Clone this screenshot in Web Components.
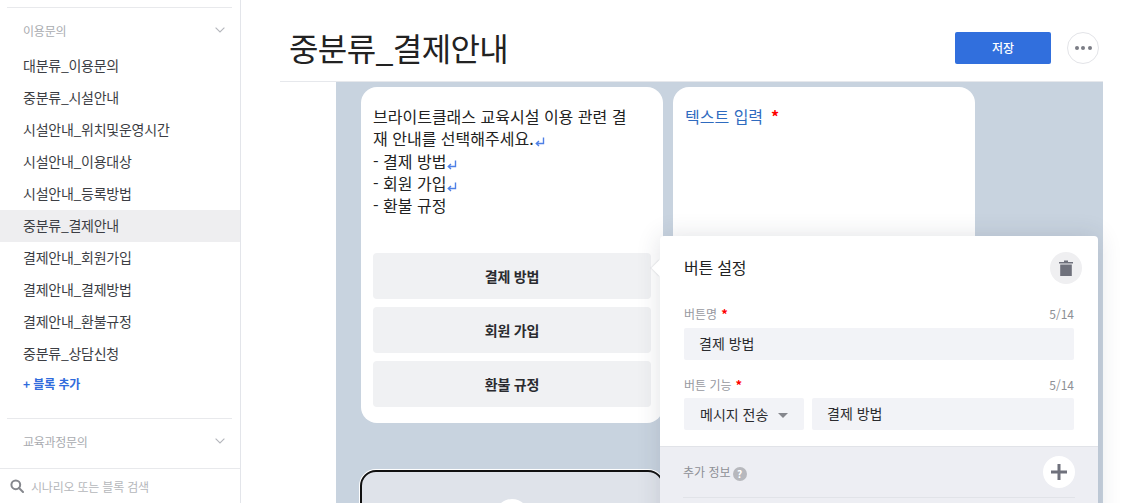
<!DOCTYPE html>
<html lang="ko">
<head>
<meta charset="utf-8">
<title>중분류_결제안내</title>
<style>
html, body { margin: 0; height: 100%; overflow: hidden; background: #fff; }
body { display: flex; height: 503px; font-family: "Noto Sans CJK KR", "Noto Sans", sans-serif; color: #222; }
</style>
</head>
<body>
<app-sidebar>
  <side-group title="이용문의" open>
    <side-item>대분류_이용문의</side-item>
    <side-item>중분류_시설안내</side-item>
    <side-item>시설안내_위치및운영시간</side-item>
    <side-item>시설안내_이용대상</side-item>
    <side-item>시설안내_등록방법</side-item>
    <side-item active>중분류_결제안내</side-item>
    <side-item>결제안내_회원가입</side-item>
    <side-item>결제안내_결제방법</side-item>
    <side-item>결제안내_환불규정</side-item>
    <side-item>중분류_상담신청</side-item>
  </side-group>
</app-sidebar>
<app-main>
  <flow-canvas>
    <message-card>
      브라이트클래스 교육시설 이용 관련 결재 안내를 선택해주세요.<ret-mark></ret-mark><br>- 결제 방법<ret-mark></ret-mark><br>- 회원 가입<ret-mark></ret-mark><br>- 환불 규정
    </message-card>
    <input-card></input-card>
    <next-card></next-card>
  </flow-canvas>
  <button-panel></button-panel>
</app-main>

<script>
// Small helper so each element only has to give its markup
class ShadowEl extends HTMLElement {
    constructor() {
        super();
        this.attachShadow({ mode: "open" });
    }
    connectedCallback() {
        this.shadowRoot.innerHTML = this.render();
    }
}

const chevron = `<svg width="10" height="6" viewBox="0 0 10 6" fill="none" stroke="#b4b6bc" stroke-width="1.1"><path d="M0.6 0.6L5 5l4.400-4.400"/></svg>`;

class AppSidebar extends ShadowEl {
    render() {
        return `
        <style>
        :host { display: flex; flex-direction: column; width: 240px; flex: none; height: 503px; border-right: 1px solid #e3e5ea; font-size: 14px; box-sizing: content-box; }
        .scroll { flex: 1; min-height: 0; padding-top: 7px; }
        .rule { height: 1px; background: #e8e9ec; margin: 0 8px 0 7px; }
        .add { color: #2f6bdc; font-size: 12px; font-weight: 700; padding-left: 23px; height: 20px; line-height: 20px; margin-top: -1px; letter-spacing: -0.1px; }
        .closed { display: flex; justify-content: space-between; align-items: center; height: 44px; padding: 0 15px 0 23px; color: #a9abb0; font-size: 12px; letter-spacing: -0.3px; }
        .closed svg { display: block; }
        .search { display: flex; align-items: center; gap: 7px; height: 34px; border-top: 1px solid #e8e9ec; padding-left: 10px; color: #b5b7bb; font-size: 12px; letter-spacing: -0.2px; }
        </style>
        <div class="scroll">
            <div class="rule"></div>
            <slot></slot>
            <div class="add">+ 블록 추가</div>
            <div class="rule" style="margin-top:24px"></div>
            <div class="closed"><span>교육과정문의</span>${chevron}</div>
        </div>
        <div class="search">
            <svg width="14" height="14" viewBox="0 0 14 14" fill="none" stroke="#85878d" stroke-width="2"><circle cx="5.8" cy="5.8" r="4.4"/><path d="M9 9l4 4" stroke-linecap="round"/></svg>
            <span>시나리오 또는 블록 검색</span>
        </div>`;
    }
}
customElements.define("app-sidebar", AppSidebar);

class SideGroup extends ShadowEl {
    render() {
        return `
        <style>
        :host { display: block; }
        .head { display: flex; justify-content: space-between; align-items: center; height: 44px; padding: 0 15px 0 23px; color: #a9abb0; font-size: 12px; letter-spacing: -0.2px; }
        .head svg { display: block; }
        .list { margin-top: -2px; padding-bottom: 5px; }
        </style>
        <div class="head"><span>${this.getAttribute("title")}</span>${chevron}</div>
        <div class="list"><slot></slot></div>`;
    }
}
customElements.define("side-group", SideGroup);

class SideItem extends ShadowEl {
    render() {
        return `
        <style>
        :host { display: block; height: 32px; line-height: 31px; padding-left: 23px; color: #3c3e44; font-size: 14px; letter-spacing: -0.25px; white-space: nowrap; }
        :host([active]) { background: #eeeef0; }
        </style>
        <slot></slot>`;
    }
}
customElements.define("side-item", SideItem);

class AppMain extends ShadowEl {
    render() {
        return `
        <style>
        :host { display: block; flex: 1; min-width: 0; position: relative; height: 503px; overflow: hidden; }
        .head { display: flex; align-items: center; height: 82px; width: 823px; margin-left: 39px; padding: 14px 4px 0 9px; box-sizing: border-box; border-bottom: 1px solid #e6e8ec; }
        h1 { flex: 1; margin: -2px 0 0; font-size: 32px; font-weight: 400; color: #222; line-height: 1; letter-spacing: -0.6px; }
        .save { width: 96px; height: 32px; background: #316fdd; color: #fff; border-radius: 2px; font-size: 12px; font-weight: 500; text-align: center; line-height: 31px; }
        .more { width: 32px; height: 32px; box-sizing: border-box; margin-left: 16px; border: 1px solid #e3e4e8; border-radius: 50%; display: flex; align-items: center; justify-content: center; gap: 2.5px; }
        .more i { width: 4px; height: 4px; border-radius: 50%; background: #7b7d85; }
        .row { margin-left: 95px; width: 767px; }
        </style>
        <div class="head">
            <h1>중분류_결제안내</h1>
            <div class="save">저장</div>
            <div class="more"><i></i><i></i><i></i></div>
        </div>
        <div class="row"><slot></slot></div>`;
    }
}
customElements.define("app-main", AppMain);

class FlowCanvas extends ShadowEl {
    render() {
        return `
        <style>
        :host { display: grid; grid-template-columns: 302px 302px; column-gap: 10px; row-gap: 47px; align-content: start; height: 421px; overflow: hidden; background: #c8d3df; padding: 5px 0 0 25px; box-sizing: border-box; }
        </style>
        <slot></slot>`;
    }
}
customElements.define("flow-canvas", FlowCanvas);

class MessageCard extends ShadowEl {
    render() {
        return `
        <style>
        :host { display: block; background: #fff; border-radius: 16px; height: 336px; padding: 18px 12px 0; box-sizing: border-box; font-size: 16px; line-height: 22.25px; color: #222; position: relative; }
        .text { height: 148px; width: 262px; word-break: break-all; }
        .btns { display: flex; flex-direction: column; gap: 8px; }
        .btn { height: 46px; border-radius: 4px; background: #f0f1f3; color: #2a2b2f; font-size: 14px; font-weight: 700; text-align: center; line-height: 46px; letter-spacing: -0.2px; }
        </style>
        <div class="text"><slot></slot></div>
        <div class="btns">
            <div class="btn">결제 방법</div>
            <div class="btn">회원 가입</div>
            <div class="btn">환불 규정</div>
        </div>`;
    }
}
customElements.define("message-card", MessageCard);

class RetMark extends ShadowEl {
    render() {
        return `
        <style>:host { display: inline-block; width: 10px; height: 10px; margin-left: 1px; vertical-align: -2px; }
        svg { display: block; }</style>
        <svg width="10" height="10" viewBox="0 0 10 10" fill="none" stroke="#4f80e6" stroke-width="1.4"><path d="M8.5 0.5v6h-7M4 4L1.3 6.5 4 9"/></svg>`;
    }
}
customElements.define("ret-mark", RetMark);

class InputCard extends ShadowEl {
    render() {
        return `
        <style>
        :host { display: block; background: #fff; border-radius: 16px; height: 336px; padding: 18px 12px 0; box-sizing: border-box; font-size: 16px; line-height: 22.25px; color: #2f6bbf; }
        b { color: #f00; font-weight: 700; margin-left: 8px; }
        </style>
        텍스트 입력<b>*</b>`;
    }
}
customElements.define("input-card", InputCard);

class NextCard extends ShadowEl {
    render() {
        return `
        <style>
        :host { display: flex; justify-content: center; grid-column: 1 / span 2; width: 300px; height: 120px; margin-left: -1px; background: #dfe3ea; border: 2px solid #111; border-radius: 16px; box-sizing: content-box; box-shadow: 0 0 0 1px #fff; }
        i { width: 34px; height: 34px; background: #fff; border-radius: 50%; margin-top: 27px; }
        </style>
        <i></i>`;
    }
}
customElements.define("next-card", NextCard);

class ButtonPanel extends ShadowEl {
    render() {
        return `
        <style>
        :host { display: block; position: absolute; left: 419px; top: 236px; width: 438px; height: 300px; background: #fff; border-radius: 4px 4px 0 0; box-shadow: 0 0 24px rgba(40,50,70,.14); box-sizing: border-box; color: #222; }
        .arrow { position: absolute; left: -6px; top: 26px; width: 12px; height: 12px; background: #fff; transform: rotate(45deg); box-shadow: -1px 1px 1px rgba(40,50,70,.08); }
        .top { display: flex; justify-content: space-between; align-items: center; height: 64px; padding: 0 16px 0 24px; font-size: 16px; letter-spacing: -0.2px; position: relative; }
        .top > span:first-child { position: relative; top: -1px; }
        .del { width: 32px; height: 32px; border-radius: 50%; background: #efeff1; display: flex; align-items: center; justify-content: center; }
        .del svg { display: block; }
        .form { padding: 3px 24px 0; height: 143px; }
        .lab { display: flex; justify-content: space-between; align-items: center; height: 20px; font-size: 12px; color: #97999f; }
        .lab b { color: #f00; margin-left: 4px; font-weight: 700; font-size: 13px; }
        .lab em { font-style: normal; color: #8d8f95; }
        .field { background: #f2f3f7; height: 32px; border-radius: 2px; padding-left: 15px; line-height: 30px; font-size: 14px; color: #2b2c30; margin-top: 5px; }
        .fields { display: flex; gap: 8px; margin-top: 4px; }
        .fields .field { margin-top: 0; }
        .sel { width: 120px; flex: none; padding-left: 16px; box-sizing: border-box; display: flex; align-items: center; gap: 10px; }
        .sel i { width: 0; height: 0; margin-top: 2px; border: 5px solid transparent; border-top: 5px solid #85878d; border-bottom: 0; }
        .grow { flex: 1; }
        .extra { background: #edeef3; border-top: 1px solid #e1e3e8; padding: 0 23px; height: 100px; box-sizing: border-box; }
        .extra .line { display: flex; justify-content: space-between; align-items: center; height: 50px; border-bottom: 1px solid #e1e3e8; font-size: 12px; color: #8e9096; }
        .q { display: inline-block; width: 14px; height: 14px; margin-left: 2px; border-radius: 50%; background: #b7b8bd; color: #fff; text-align: center; line-height: 14px; font-size: 10px; font-weight: 700; vertical-align: -1px; }
        .plus { width: 32px; height: 32px; border-radius: 50%; background: #fff; display: flex; align-items: center; justify-content: center; }
        .plus svg { display: block; }
        </style>
        <div class="arrow"></div>
        <div class="top">
            <span>버튼 설정</span>
            <span class="del"><svg width="14" height="16" viewBox="0 0 14 16" fill="#6f717c"><path d="M0 2h5V0.6h4V2h5v1.500H0zM1.200 4.500h11.600V16H1.200z"/></svg></span>
        </div>
        <div class="form">
            <div class="lab"><span>버튼명<b>*</b></span><em>5/14</em></div>
            <div class="field">결제 방법</div>
            <div class="lab" style="margin-top:14px"><span>버튼 기능<b>*</b></span><em>5/14</em></div>
            <div class="fields">
                <div class="field sel">메시지 전송<i></i></div>
                <div class="field grow">결제 방법</div>
            </div>
        </div>
        <div class="extra">
            <div class="line">
                <span>추가 정보<span class="q">?</span></span>
                <span class="plus"><svg width="16" height="16" viewBox="0 0 16 16" fill="#6f717c"><path d="M6.500 0h3v6.500H16v3H9.500V16h-3V9.500H0v-3h6.500z"/></svg></span>
            </div>
        </div>`;
    }
}
customElements.define("button-panel", ButtonPanel);
</script>
</body>
</html>
